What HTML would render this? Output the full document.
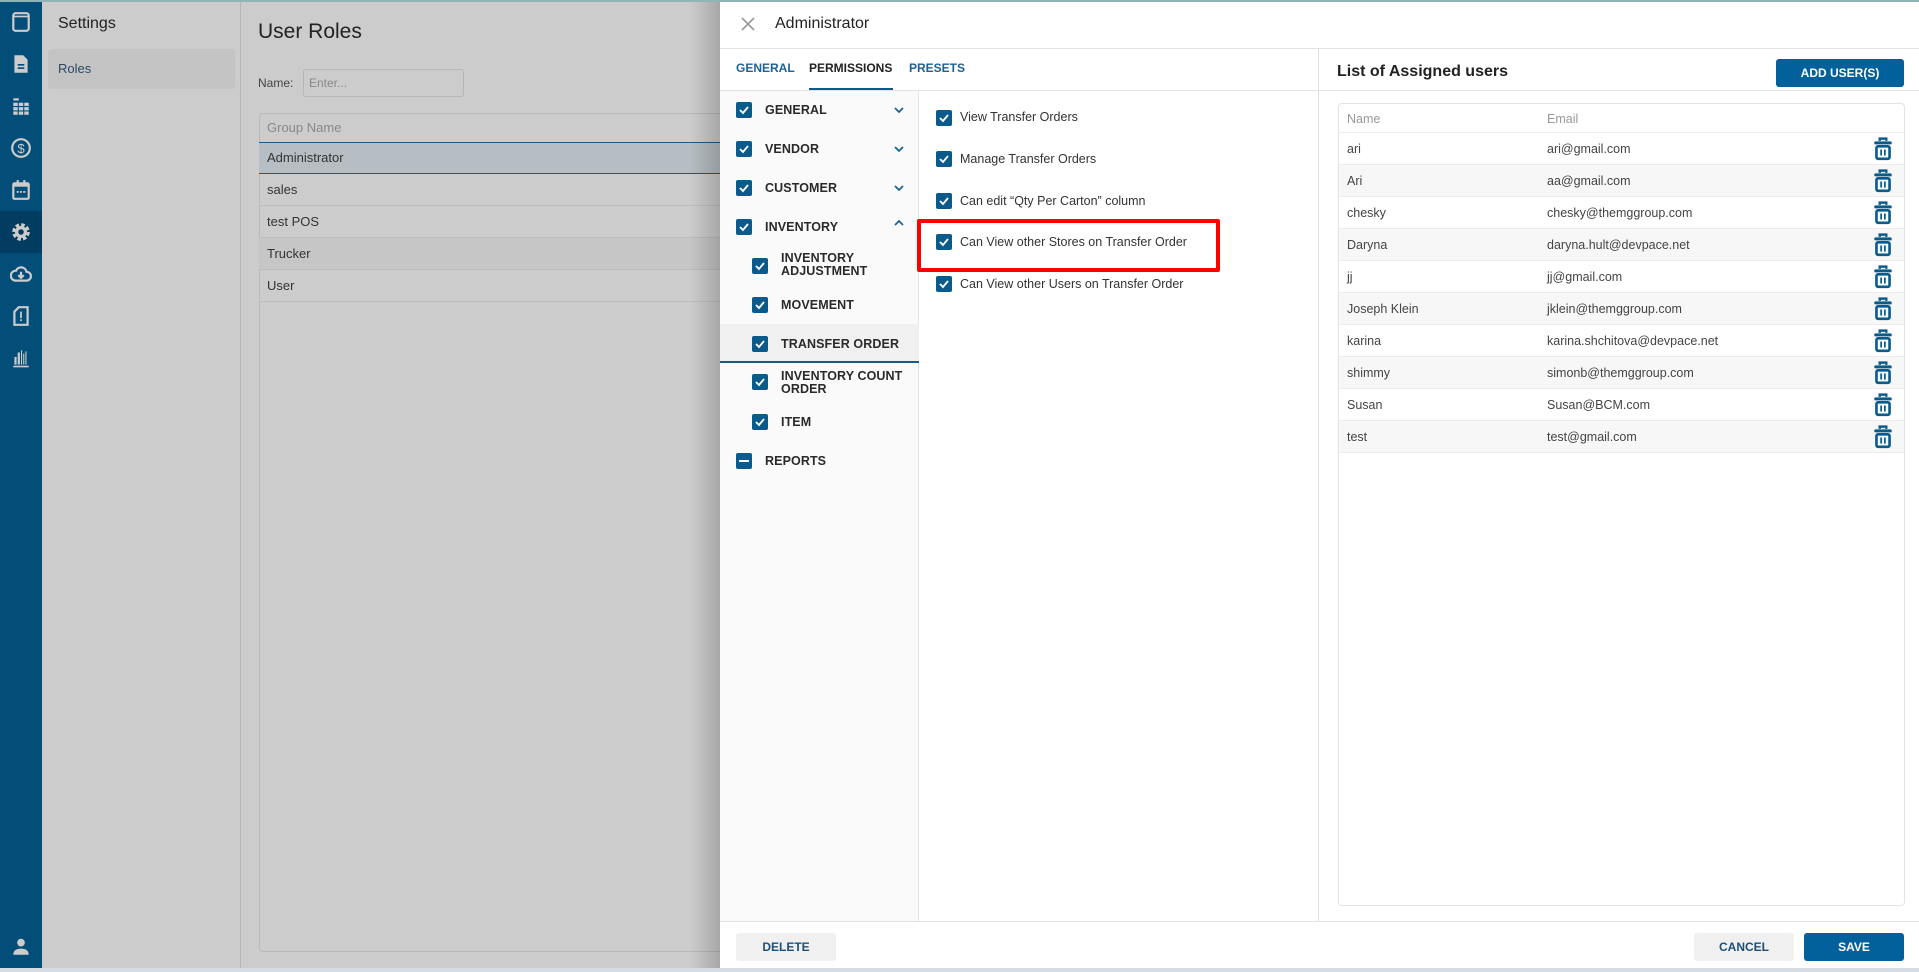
<!DOCTYPE html>
<html><head><meta charset="utf-8"><style>
*{box-sizing:border-box;margin:0;padding:0}
body{width:1919px;height:972px;overflow:hidden;font-family:"Liberation Sans",Arial,sans-serif;background:#cccccc;position:relative;color:#333}
.abs{position:absolute}
.side{left:0;top:0;width:42px;height:972px;background:#034d79}
.ic{position:absolute;left:10px;width:22px;height:22px}
.cb{position:absolute;width:16px;height:16px;background:#0a5a8c;border-radius:2px}
.cb svg{position:absolute;left:2px;top:2px}
.lt{position:absolute;font-size:12.5px;font-weight:bold;color:#2a2a2a;letter-spacing:.1px}
.pt{position:absolute;font-size:12.5px;color:#333}
.row{position:absolute;left:0;width:566px;height:32px;border-bottom:1px solid #ececec;font-size:12.5px;color:#444}
.row span{position:absolute;top:9px}
.btn{position:absolute;height:28px;border-radius:3px;font-size:12px;font-weight:bold;text-align:center;line-height:28px}
</style></head><body>
<div class="abs" style="left:0;top:0;width:1919px;height:2px;background:#8fb5b8;z-index:5"></div>
<div class="abs side">
 <svg class="ic" style="top:11px" viewBox="0 0 20 20"><rect x="3" y="2" width="14" height="16" rx="2" fill="none" stroke="#ccc" stroke-width="2"/><line x1="3" y1="5" x2="17" y2="5" stroke="#ccc" stroke-width="1.5"/></svg>
 <svg class="ic" style="top:53px" viewBox="0 0 20 20"><path d="M4 2h8l4 4v12H4z" fill="#ccc"/><rect x="7" y="10" width="6" height="1.5" fill="#034d79"/><rect x="7" y="13" width="6" height="1.5" fill="#034d79"/></svg>
 <svg class="ic" style="top:95px" viewBox="0 0 20 20" fill="#ccc"><rect x="3" y="3" width="5" height="2"/><rect x="3" y="7" width="4" height="3"/><rect x="8" y="7" width="4" height="3"/><rect x="13" y="7" width="4" height="3"/><rect x="3" y="11" width="4" height="3"/><rect x="8" y="11" width="4" height="3"/><rect x="13" y="11" width="4" height="3"/><rect x="3" y="15" width="4" height="3"/><rect x="8" y="15" width="4" height="3"/><rect x="13" y="15" width="4" height="3"/></svg>
 <svg class="ic" style="top:137px" viewBox="0 0 20 20"><circle cx="10" cy="10" r="8" fill="none" stroke="#ccc" stroke-width="2"/><text x="10" y="14.5" font-size="12" text-anchor="middle" fill="#ccc" font-family="Liberation Sans">$</text></svg>
 <svg class="ic" style="top:179px" viewBox="0 0 20 20"><rect x="3" y="4" width="14" height="14" rx="1" fill="none" stroke="#ccc" stroke-width="2"/><rect x="3" y="4" width="14" height="3" fill="#ccc"/><rect x="6" y="1" width="2" height="4" fill="#ccc"/><rect x="12" y="1" width="2" height="4" fill="#ccc"/><rect x="6" y="11" width="2" height="1.5" fill="#ccc"/><rect x="9" y="11" width="2" height="1.5" fill="#ccc"/><rect x="12" y="11" width="2" height="1.5" fill="#ccc"/></svg>
 <div class="abs" style="left:0;top:211px;width:42px;height:42px;background:#023c60"></div>
 <svg class="ic" style="top:221px" viewBox="0 0 20 20"><circle cx="10" cy="10" r="6" fill="none" stroke="#ccc" stroke-width="4" stroke-dasharray="3 1.7"/><circle cx="10" cy="10" r="5.5" fill="#ccc"/><circle cx="10" cy="10" r="2.5" fill="#023c60"/></svg>
 <svg class="ic" style="top:263px" viewBox="0 0 20 20"><path d="M5 16h10a4 4 0 0 0 0-8 5 5 0 0 0-9.5-1A4.5 4.5 0 0 0 5 16z" fill="none" stroke="#ccc" stroke-width="2"/><path d="M10 8v5M7.5 11l2.5 2.5 2.5-2.5" stroke="#ccc" stroke-width="2" fill="none"/></svg>
 <svg class="ic" style="top:305px" viewBox="0 0 20 20"><path d="M8 2h8v16H4V6z" fill="none" stroke="#ccc" stroke-width="2"/><rect x="9.2" y="6" width="1.6" height="6" fill="#ccc"/><rect x="9.2" y="13" width="1.6" height="1.6" fill="#ccc"/></svg>
 <svg class="ic" style="top:347px" viewBox="0 0 20 20" fill="#ccc"><rect x="4" y="9" width="2" height="7"/><rect x="7" y="5" width="2" height="11"/><rect x="10" y="3" width="1" height="13"/><rect x="12" y="6" width="1" height="10"/><rect x="14" y="4" width="1" height="12"/><rect x="3" y="17" width="14" height="1.5"/></svg>
 <svg class="ic" style="top:936px" viewBox="0 0 20 20" fill="#ccc"><circle cx="10" cy="6" r="3.5"/><path d="M3 17c0-4 3-5.5 7-5.5s7 1.5 7 5.5z"/></svg>
</div>
<div class="abs" style="left:42px;top:0;width:199px;height:972px;border-right:1px solid #b5b5b5"></div>
<div class="abs" style="left:58px;top:15px;font-size:16px;color:#222">Settings</div>
<div class="abs" style="left:48px;top:49px;width:187px;height:40px;background:#c3c3c3;border-radius:3px"></div>
<div class="abs" style="left:58px;top:61px;font-size:13px;color:#2c4a66">Roles</div>
<div class="abs" style="left:258px;top:20px;font-size:21px;color:#222">User Roles</div>
<div class="abs" style="left:258px;top:76px;font-size:12px;color:#444">Name:</div>
<div class="abs" style="left:303px;top:69px;width:161px;height:28px;border:1px solid #b8b8b8;border-radius:3px"></div>
<div class="abs" style="left:309px;top:76px;font-size:12px;color:#888">Enter...</div>
<div class="abs" style="left:259px;top:113px;width:470px;height:839px;border:1px solid #b8b8b8;border-radius:4px"></div>
<div class="abs" style="left:267px;top:120px;font-size:13px;color:#888">Group Name</div>
<div class="abs" style="left:259px;top:142px;width:470px;height:32px;background:#b6bec3;border-top:1px solid #1d5a85;border-bottom:1px solid #1d5a85"></div>
<div class="abs" style="left:267px;top:150px;font-size:13px;color:#333">Administrator</div>
<div class="abs" style="left:259px;top:174px;width:470px;height:32px;border-bottom:1px solid #bdbdbd"></div>
<div class="abs" style="left:267px;top:182px;font-size:13px;color:#333">sales</div>
<div class="abs" style="left:259px;top:206px;width:470px;height:32px;border-bottom:1px solid #bdbdbd"></div>
<div class="abs" style="left:267px;top:214px;font-size:13px;color:#333">test POS</div>
<div class="abs" style="left:259px;top:238px;width:470px;height:32px;background:#c6c6c6;border-bottom:1px solid #bdbdbd"></div>
<div class="abs" style="left:267px;top:246px;font-size:13px;color:#333">Trucker</div>
<div class="abs" style="left:259px;top:270px;width:470px;height:32px;border-bottom:1px solid #bdbdbd"></div>
<div class="abs" style="left:267px;top:278px;font-size:13px;color:#333">User</div>
<div class="abs" style="left:690px;top:0;width:30px;height:972px;background:linear-gradient(to right,rgba(0,0,0,0),rgba(0,0,0,.18))"></div>

<div class="abs" style="left:720px;top:0;width:1199px;height:968px;background:#fff">
 <svg class="abs" style="left:21px;top:17px" width="14" height="14" viewBox="0 0 14 14"><path d="M1 1l12 12M13 1L1 13" stroke="#999" stroke-width="1.6"/></svg>
 <div class="abs" style="left:55px;top:15px;font-size:16px;color:#222">Administrator</div>
 <div class="abs" style="left:0;top:48px;width:1199px;height:1px;background:#e3e3e3"></div>
 <div class="abs" style="left:16px;top:61px;font-size:12px;font-weight:bold;color:#1e6294">GENERAL</div>
 <div class="abs" style="left:89px;top:61px;font-size:12px;font-weight:bold;color:#222">PERMISSIONS</div>
 <div class="abs" style="left:89px;top:88px;width:84px;height:2px;background:#0a5a8c"></div>
 <div class="abs" style="left:189px;top:61px;font-size:12px;font-weight:bold;color:#1e6294">PRESETS</div>
 <div class="abs" style="left:0;top:90px;width:1199px;height:1px;background:#e3e3e3"></div>
 <div class="abs" style="left:0;top:91px;width:199px;height:831px;background:#fafafa;border-right:1px solid #e3e3e3"></div>
 <div class="abs" style="left:598px;top:48px;width:1px;height:874px;background:#e3e3e3"></div>
 <div class="abs" style="left:0;top:324px;width:199px;height:39px;background:#f0f0f0;border-bottom:2px solid #1d5a85"></div>
 <div class="abs" style="left:0;top:921px;width:1199px;height:1px;background:#e3e3e3"></div>
</div>
<div class="abs" style="left:0;top:968px;width:1919px;height:4px;background:#d5dde3"></div>

<div class="cb" style="left:736px;top:102px"><svg width="12" height="12"><path d="M2 6l3 3 5-6" stroke="#fff" stroke-width="1.8" fill="none"/></svg></div><div class="lt" style="left:765px;top:103px">GENERAL</div>
<div class="cb" style="left:736px;top:141px"><svg width="12" height="12"><path d="M2 6l3 3 5-6" stroke="#fff" stroke-width="1.8" fill="none"/></svg></div><div class="lt" style="left:765px;top:142px">VENDOR</div>
<div class="cb" style="left:736px;top:180px"><svg width="12" height="12"><path d="M2 6l3 3 5-6" stroke="#fff" stroke-width="1.8" fill="none"/></svg></div><div class="lt" style="left:765px;top:181px">CUSTOMER</div>
<div class="cb" style="left:736px;top:219px"><svg width="12" height="12"><path d="M2 6l3 3 5-6" stroke="#fff" stroke-width="1.8" fill="none"/></svg></div><div class="lt" style="left:765px;top:220px">INVENTORY</div>
<svg class="abs" style="left:894px;top:106px" width="10" height="8"><path d="M1 2l4 4 4-4" stroke="#1e6294" stroke-width="1.8" fill="none"/></svg>
<svg class="abs" style="left:894px;top:145px" width="10" height="8"><path d="M1 2l4 4 4-4" stroke="#1e6294" stroke-width="1.8" fill="none"/></svg>
<svg class="abs" style="left:894px;top:184px" width="10" height="8"><path d="M1 2l4 4 4-4" stroke="#1e6294" stroke-width="1.8" fill="none"/></svg>
<svg class="abs" style="left:894px;top:219px" width="10" height="8"><path d="M1 6l4-4 4 4" stroke="#1e6294" stroke-width="1.8" fill="none"/></svg>
<div class="cb" style="left:752px;top:258px"><svg width="12" height="12"><path d="M2 6l3 3 5-6" stroke="#fff" stroke-width="1.8" fill="none"/></svg></div><div class="lt" style="left:781px;top:252px;line-height:13px">INVENTORY<br>ADJUSTMENT</div>
<div class="cb" style="left:752px;top:297px"><svg width="12" height="12"><path d="M2 6l3 3 5-6" stroke="#fff" stroke-width="1.8" fill="none"/></svg></div><div class="lt" style="left:781px;top:298px">MOVEMENT</div>
<div class="cb" style="left:752px;top:336px"><svg width="12" height="12"><path d="M2 6l3 3 5-6" stroke="#fff" stroke-width="1.8" fill="none"/></svg></div><div class="lt" style="left:781px;top:337px">TRANSFER ORDER</div>
<div class="cb" style="left:752px;top:374px"><svg width="12" height="12"><path d="M2 6l3 3 5-6" stroke="#fff" stroke-width="1.8" fill="none"/></svg></div><div class="lt" style="left:781px;top:370px;line-height:13px">INVENTORY COUNT<br>ORDER</div>
<div class="cb" style="left:752px;top:414px"><svg width="12" height="12"><path d="M2 6l3 3 5-6" stroke="#fff" stroke-width="1.8" fill="none"/></svg></div><div class="lt" style="left:781px;top:415px">ITEM</div>
<div class="cb" style="left:736px;top:453px"><div style="position:absolute;left:3px;top:7px;width:10px;height:2px;background:#fff"></div></div><div class="lt" style="left:765px;top:454px">REPORTS</div>

<div class="cb" style="left:936px;top:110px"><svg width="12" height="12"><path d="M2 6l3 3 5-6" stroke="#fff" stroke-width="1.8" fill="none"/></svg></div><div class="pt" style="left:960px;top:110px">View Transfer Orders</div>
<div class="cb" style="left:936px;top:151px"><svg width="12" height="12"><path d="M2 6l3 3 5-6" stroke="#fff" stroke-width="1.8" fill="none"/></svg></div><div class="pt" style="left:960px;top:152px">Manage Transfer Orders</div>
<div class="cb" style="left:936px;top:193px"><svg width="12" height="12"><path d="M2 6l3 3 5-6" stroke="#fff" stroke-width="1.8" fill="none"/></svg></div><div class="pt" style="left:960px;top:194px">Can edit “Qty Per Carton” column</div>
<div class="cb" style="left:936px;top:234px"><svg width="12" height="12"><path d="M2 6l3 3 5-6" stroke="#fff" stroke-width="1.8" fill="none"/></svg></div><div class="pt" style="left:960px;top:235px">Can View other Stores on Transfer Order</div>
<div class="cb" style="left:936px;top:276px"><svg width="12" height="12"><path d="M2 6l3 3 5-6" stroke="#fff" stroke-width="1.8" fill="none"/></svg></div><div class="pt" style="left:960px;top:277px">Can View other Users on Transfer Order</div>
<div class="abs" style="left:917px;top:219px;width:303px;height:53px;border:4px solid #f00;border-radius:2px"></div>

<div class="abs" style="left:1337px;top:63px;font-size:16px;font-weight:bold;color:#222">List of Assigned users</div>
<div class="btn" style="left:1776px;top:59px;width:128px;background:#02609a;color:#fff">ADD USER(S)</div>
<div class="abs" style="left:1338px;top:103px;width:567px;height:803px;border:1px solid #e3e3e3;border-radius:4px;overflow:hidden">
 <div class="row" style="top:0;height:29px;color:#999"><span style="left:8px;top:8px">Name</span><span style="left:208px;top:8px">Email</span></div>
 <div id="rows"></div>
</div>
<script>
const d=[["ari","ari@gmail.com"],["Ari","aa@gmail.com"],["chesky","chesky@themggroup.com"],["Daryna","daryna.hult@devpace.net"],["jj","jj@gmail.com"],["Joseph Klein","jklein@themggroup.com"],["karina","karina.shchitova@devpace.net"],["shimmy","simonb@themggroup.com"],["Susan","Susan@BCM.com"],["test","test@gmail.com"]];
let h="";d.forEach((r,i)=>{h+=`<div class="row" style="top:${29+i*32}px;background:${i%2?'#f7f7f7':'#fff'}"><span style="left:8px">${r[0]}</span><span style="left:208px">${r[1]}</span><svg style="position:absolute;left:534px;top:4px" width="20" height="24" viewBox="0 0 18 22"><path d="M6 3.5V1.5h6V3.5" fill="none" stroke="#0a5a8c" stroke-width="2.2"/><rect x="1" y="4" width="16" height="2.8" rx="1" fill="#0a5a8c"/><rect x="3" y="8.5" width="12" height="11.5" rx="1.5" fill="none" stroke="#0a5a8c" stroke-width="2.4"/><rect x="6.5" y="11.5" width="1.6" height="5.5" fill="#0a5a8c"/><rect x="9.9" y="11.5" width="1.6" height="5.5" fill="#0a5a8c"/></svg></div>`});
document.getElementById("rows").innerHTML=h;
</script>

<div class="btn" style="left:736px;top:933px;width:100px;background:#f0f0f0;color:#1e4f78">DELETE</div>
<div class="btn" style="left:1694px;top:933px;width:100px;background:#f0f0f0;color:#1e4f78">CANCEL</div>
<div class="btn" style="left:1804px;top:933px;width:100px;background:#02609a;color:#fff">SAVE</div>
</body></html>
